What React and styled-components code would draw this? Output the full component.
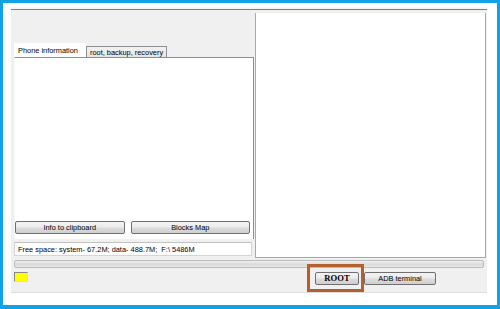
import React from "react";
import styled, { createGlobalStyle } from "styled-components";

const GlobalStyle = createGlobalStyle`
  html, body {
    margin: 0;
    padding: 0;
    background: #ffffff;
  }
  body {
    font-family: "Liberation Sans", Arial, sans-serif;
    font-size: 7.4px;
    color: #000000;
  }
`;

const Frame = styled.div`
  box-sizing: border-box;
  width: 500px;
  height: 309px;
  border: 3px solid #0fa3e6;
  border-bottom-width: 4px;
  background: #ffffff;
  padding: 4px 10px 12px 8px;
`;

const Window = styled.div`
  display: flex;
  flex-direction: column;
  height: 286px;
  background: #f0f0f0;
  border-bottom: 1px solid #dedede;
  box-sizing: border-box;
`;

const TopStrip = styled.div`
  height: 6px;
  box-sizing: border-box;
  background: #f0f0f0;
  border-top: 2px solid #f6f6f6;
  position: relative;

  &::after {
    content: "";
    position: absolute;
    left: 0;
    right: 0;
    top: 0;
    height: 1px;
    background: #7d7d7d;
  }
`;

const Main = styled.div`
  display: flex;
  height: 245px;
`;

const LeftPanel = styled.div`
  width: 245px;
  box-sizing: border-box;
  padding: 30px 1px 1px 3px;
  border-right: 1px solid #a9a9a9;
  display: flex;
  flex-direction: column;
`;

const TabRow = styled.div`
  display: flex;
  align-items: flex-end;
  height: 15px;
`;

const Tab = styled.div`
  box-sizing: border-box;
  height: ${(p) => (p.$active ? "15px" : "12px")};
  padding: ${(p) => (p.$active ? "2px 7px 0 3px" : "1px 3px 0 3px")};
  background: ${(p) =>
    p.$active ? "#ffffff" : "linear-gradient(#f2f2f2, #e3e3e3)"};
  border: 1px solid ${(p) => (p.$active ? "#ffffff" : "#8c8e94")};
  border-bottom: none;
  white-space: nowrap;
  line-height: 10px;
`;

const TabBody = styled.div`
  height: 182px;
  box-sizing: border-box;
  background: #ffffff;
  border-top: 1px solid #8c8e94;
  border-right: 1px solid #8c8e94;
  border-left: 1px solid #f6f6f6;
  margin-top: -1px;
  display: flex;
  flex-direction: column;
  justify-content: flex-end;
  padding: 0 3px 5px 0;
`;

const TabButtons = styled.div`
  display: flex;
  gap: 6px;
`;

const Button = styled.button`
  box-sizing: border-box;
  width: ${(p) => p.$w}px;
  height: 13px;
  padding: 0;
  border: 1px solid #707070;
  border-radius: 2px;
  background: linear-gradient(#f3f3f3 0%, #ebebeb 48%, #dcdcdc 52%, #cfcfcf 100%);
  font-family: "Liberation Sans", Arial, sans-serif;
  font-size: 7.4px;
  line-height: 11px;
  color: #000000;
`;

const RootButton = styled(Button)`
  font-family: "Liberation Serif", "Times New Roman", serif;
  font-weight: bold;
  font-size: 8.6px;
`;

const FreeSpace = styled.div`
  margin-top: 3px;
  width: 238px;
  height: 14px;
  box-sizing: border-box;
  background: #ffffff;
  border: 1px solid #d5d5d5;
  border-top-color: #c2c2c2;
  padding: 1px 0 0 3px;
  line-height: 11px;
  white-space: nowrap;
`;

const RightPanel = styled.div`
  flex: 1;
  margin-right: 1px;
  background: #ffffff;
  border-right: 1px solid #a9a9a9;
  border-bottom: 1px solid #a9a9a9;
`;

const Progress = styled.div`
  margin: 2px 3px 0 3px;
  height: 8px;
  box-sizing: border-box;
  border: 1px solid #bcbcbc;
  border-radius: 2px;
  background: linear-gradient(#f2f2f2, #dadada 50%, #e6e6e6);
`;

const BottomRow = styled.div`
  flex: 1;
  display: flex;
  align-items: flex-start;
  padding: 4px 51px 0 3px;
`;

const Indicator = styled.div`
  width: 14px;
  height: 10px;
  box-sizing: border-box;
  background: #ffff00;
  border: 1px solid #8a8a8a;
  border-right-color: #dcdcdc;
  border-bottom-color: #dcdcdc;
`;

const ButtonGroup = styled.div`
  margin-left: auto;
  display: flex;
  gap: 5px;
`;

const Highlight = styled.div`
  position: relative;

  &::before {
    content: "";
    position: absolute;
    top: -8px;
    left: -8px;
    right: -5px;
    bottom: -7px;
    border: 3px solid #b55f2c;
    pointer-events: none;
  }
`;

export default function App() {
  return (
    <>
      <GlobalStyle />
      <Frame>
        <Window>
          <TopStrip />
          <Main>
            <LeftPanel>
              <TabRow>
                <Tab $active>Phone information</Tab>
                <Tab>root, backup, recovery</Tab>
              </TabRow>
              <TabBody>
                <TabButtons>
                  <Button $w={110}>Info to clipboard</Button>
                  <Button $w={120}>Blocks Map</Button>
                </TabButtons>
              </TabBody>
              <FreeSpace>
                Free space: system- 67.2M; data- 488.7M;&nbsp; F:\ 5486M
              </FreeSpace>
            </LeftPanel>
            <RightPanel />
          </Main>
          <Progress />
          <BottomRow>
            <Indicator />
            <ButtonGroup>
              <Highlight>
                <RootButton $w={44}>ROOT</RootButton>
              </Highlight>
              <Button $w={72}>ADB terminal</Button>
            </ButtonGroup>
          </BottomRow>
        </Window>
      </Frame>
    </>
  );
}
